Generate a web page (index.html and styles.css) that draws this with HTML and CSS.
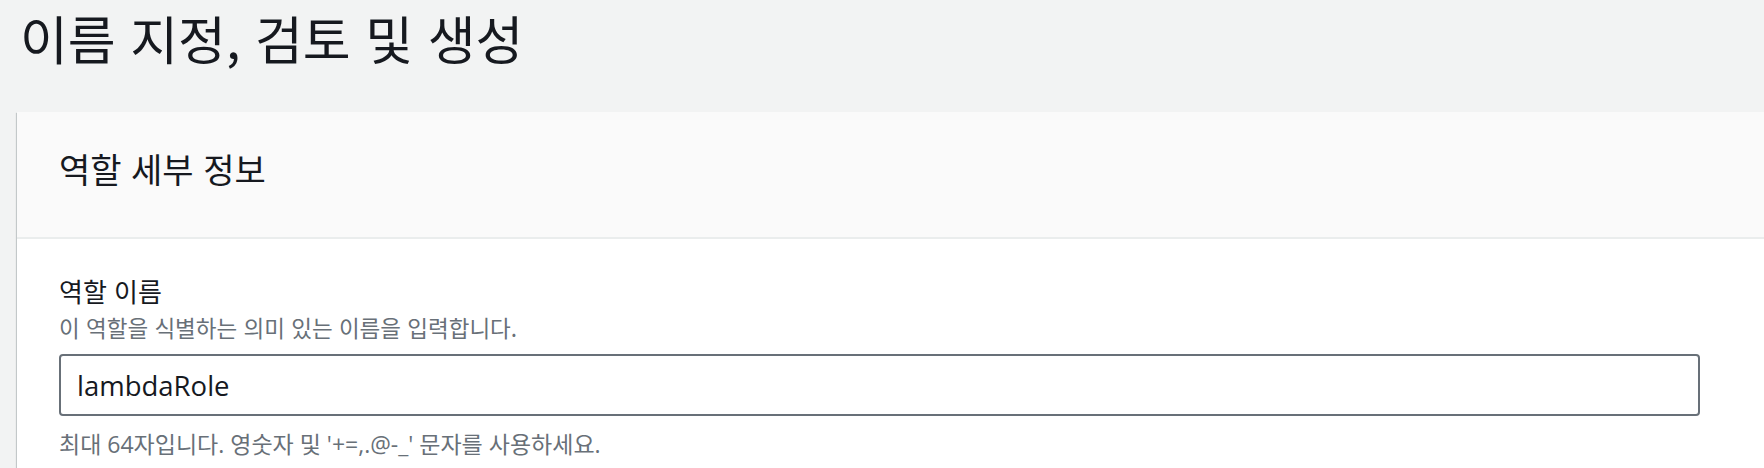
FILE: index.html
```html
<!DOCTYPE html>
<html lang="ko">
<head>
<meta charset="utf-8">
<title>이름 지정, 검토 및 생성</title>
<link rel="stylesheet" href="styles.css">
</head>
<body>
<div class="page">
  <h1 class="page-title">이름 지정, 검토 및 생성</h1>
  <section class="card">
    <header class="card-header">
      <h2 class="card-title">역할 세부 정보</h2>
    </header>
    <div class="card-body">
      <div class="field">
        <label class="field-label" for="role-name">역할 이름</label>
        <p class="field-desc">이 역할을 식별하는 의미 있는 이름을 입력합니다.</p>
        <input class="field-input" id="role-name" type="text" value="lambdaRole">
        <p class="field-hint">최대 64자입니다. 영숫자 및 '+=,.@-_' 문자를 사용하세요.</p>
      </div>
    </div>
  </section>
</div>
</body>
</html>
```
FILE: styles.css
```css
html, body {
  margin: 0;
  padding: 0;
  background: #f2f3f3;
  overflow: hidden;
}
body {
  font-family: "Open Sans", "Noto Sans CJK KR", sans-serif;
  color: #16191f;
}
.page {
  padding: 0 0 0 17px;
}
.page-title {
  margin: 0;
  padding: 0 0 0 3px;
  font-family: "Noto Sans CJK KR", sans-serif;
  font-weight: 400;
  font-size: 52px;
  line-height: 76px;
  height: 112px;
  box-sizing: border-box;
}
.card {
  background: #ffffff;
  margin-right: -40px;
  box-shadow: 0 1px 1px 0 rgba(0, 28, 36, 0.3), 1px 1px 1px 0 rgba(0, 28, 36, 0.15), -1px 1px 1px 0 rgba(0, 28, 36, 0.15);
  height: 400px;
}
.card-header {
  background: #fafafa;
  border-bottom: 2px solid #eaeded;
  height: 127px;
  box-sizing: border-box;
  padding: 0 42px 11px;
  display: flex;
  align-items: center;
}
.card-title {
  margin: 0;
  font-family: "Noto Sans CJK KR", sans-serif;
  font-weight: 400;
  font-size: 34px;
  line-height: 44px;
}
.card-body {
  padding: 34px 42px 0;
}
.field {
  width: 1641px;
  display: flex;
  flex-direction: column;
}
.field-label {
  font-family: "Noto Sans CJK KR", sans-serif;
  font-size: 26px;
  line-height: 36px;
}
.field-desc {
  margin: 3px 0 0;
  font-family: "Noto Sans CJK KR", sans-serif;
  font-size: 22.5px;
  line-height: 30px;
  color: #687078;
}
.field-input {
  margin: 12px 0 0;
  box-sizing: border-box;
  height: 62px;
  width: 100%;
  border: 2px solid #687078;
  border-radius: 4px;
  padding: 0 16px;
  font-family: "Open Sans", sans-serif;
  font-size: 27.5px;
  color: #16191f;
  background: #ffffff;
  outline: none;
}
.field-hint {
  margin: 13px 0 0;
  font-size: 23px;
  line-height: 30px;
  color: #687078;
}
```
